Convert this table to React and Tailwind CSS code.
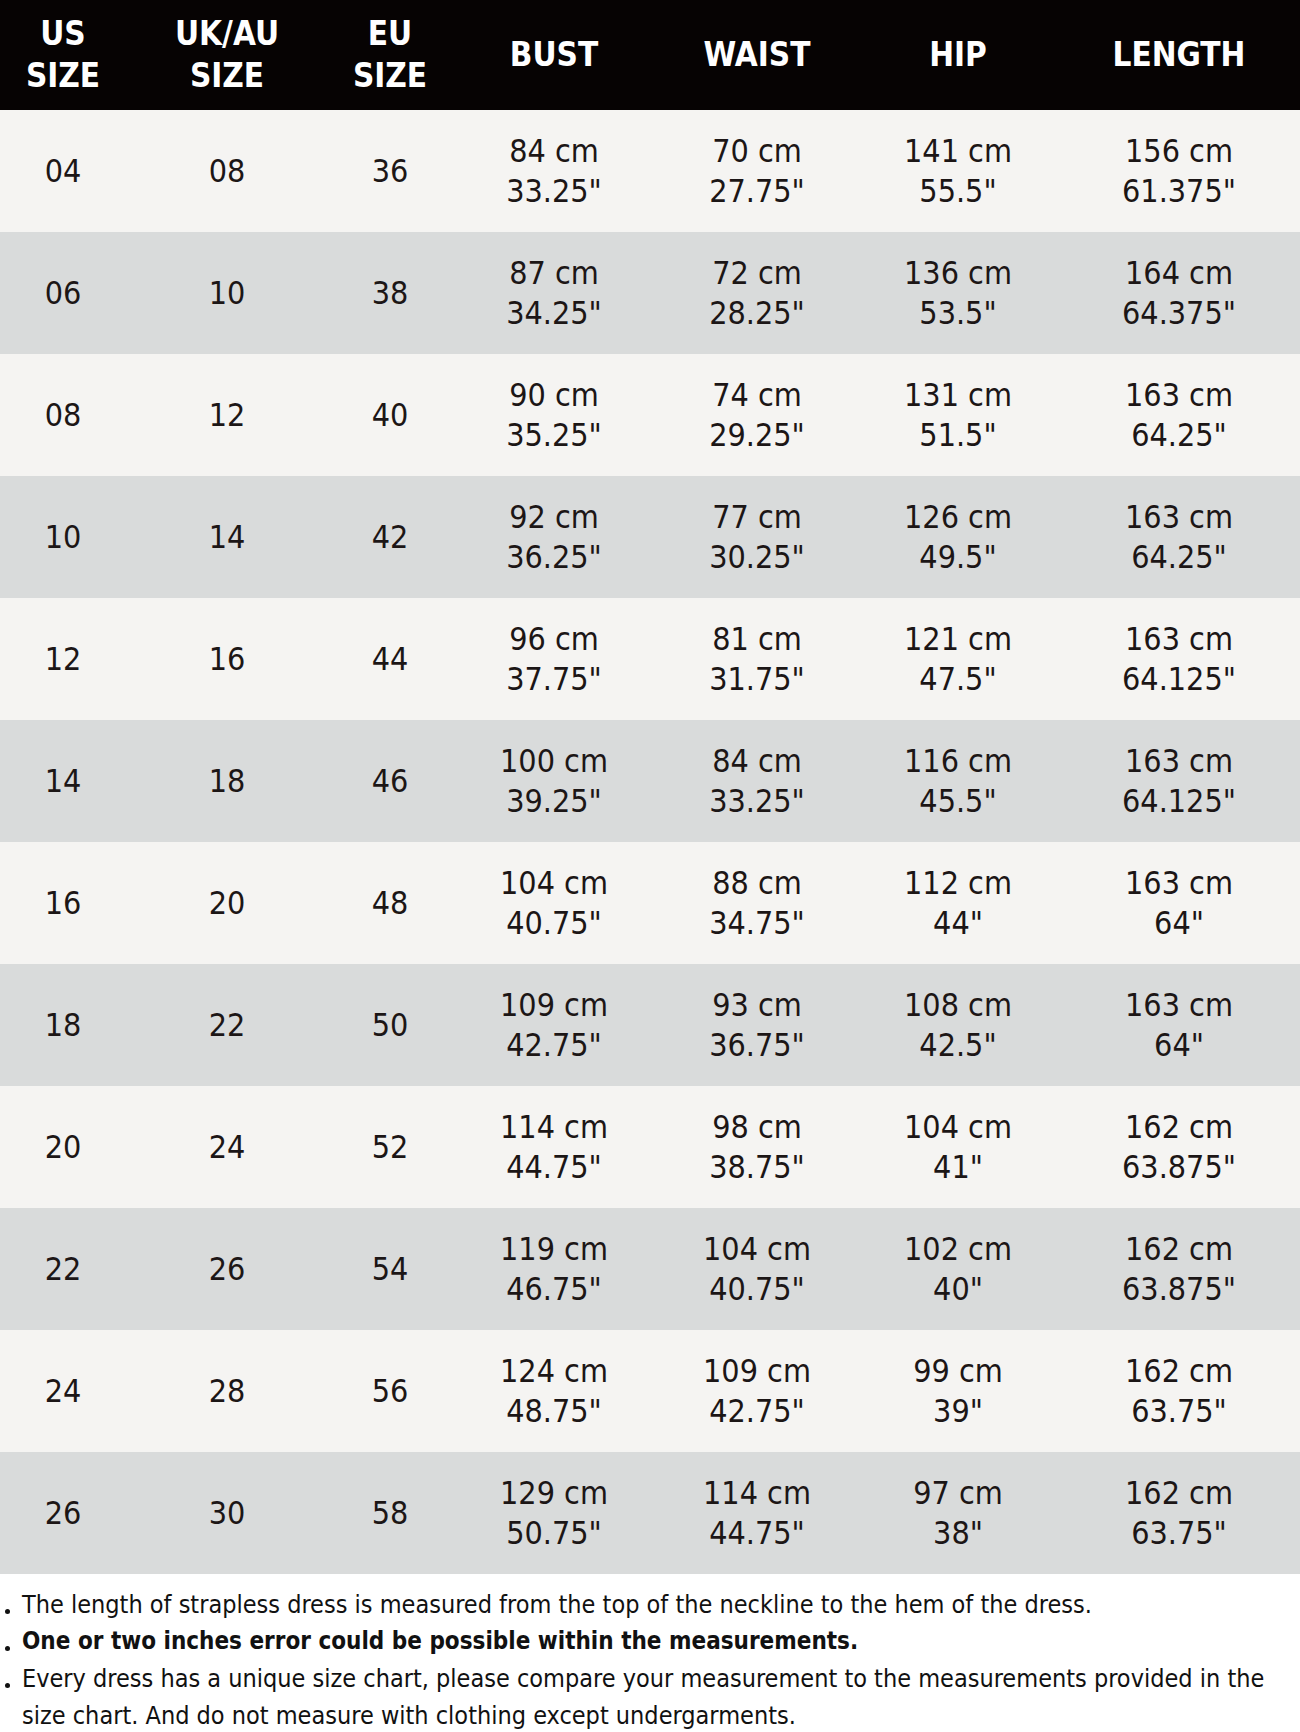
const headers = [["US", "SIZE"], ["UK/AU", "SIZE"], ["EU", "SIZE"], ["BUST"], ["WAIST"], ["HIP"], ["LENGTH"]];

const rows = [
  ["04", "08", "36", ["84 cm", '33.25"'], ["70 cm", '27.75"'], ["141 cm", '55.5"'], ["156 cm", '61.375"']],
  ["06", "10", "38", ["87 cm", '34.25"'], ["72 cm", '28.25"'], ["136 cm", '53.5"'], ["164 cm", '64.375"']],
  ["08", "12", "40", ["90 cm", '35.25"'], ["74 cm", '29.25"'], ["131 cm", '51.5"'], ["163 cm", '64.25"']],
  ["10", "14", "42", ["92 cm", '36.25"'], ["77 cm", '30.25"'], ["126 cm", '49.5"'], ["163 cm", '64.25"']],
  ["12", "16", "44", ["96 cm", '37.75"'], ["81 cm", '31.75"'], ["121 cm", '47.5"'], ["163 cm", '64.125"']],
  ["14", "18", "46", ["100 cm", '39.25"'], ["84 cm", '33.25"'], ["116 cm", '45.5"'], ["163 cm", '64.125"']],
  ["16", "20", "48", ["104 cm", '40.75"'], ["88 cm", '34.75"'], ["112 cm", '44"'], ["163 cm", '64"']],
  ["18", "22", "50", ["109 cm", '42.75"'], ["93 cm", '36.75"'], ["108 cm", '42.5"'], ["163 cm", '64"']],
  ["20", "24", "52", ["114 cm", '44.75"'], ["98 cm", '38.75"'], ["104 cm", '41"'], ["162 cm", '63.875"']],
  ["22", "26", "54", ["119 cm", '46.75"'], ["104 cm", '40.75"'], ["102 cm", '40"'], ["162 cm", '63.875"']],
  ["24", "28", "56", ["124 cm", '48.75"'], ["109 cm", '42.75"'], ["99 cm", '39"'], ["162 cm", '63.75"']],
  ["26", "30", "58", ["129 cm", '50.75"'], ["114 cm", '44.75"'], ["97 cm", '38"'], ["162 cm", '63.75"']],
];

const grid = "grid grid-cols-[126px_202px_124px_204px_202px_200px_242px]";

function Cell({ value }) {
  const lines = Array.isArray(value) ? value : [value];
  return (
    <div className="flex flex-col items-center justify-center leading-[40px]">
      {lines.map((l, i) => (
        <span key={i}>{l}</span>
      ))}
    </div>
  );
}

function Note({ children, bold }) {
  return (
    <p className={`flex items-start ${bold ? "font-bold text-[24px]" : ""}`}>
      <span className="w-[22px] h-[37px] shrink-0 flex items-end pb-[9px] pl-[5px]">
        <span className="block w-[5px] h-[5px] rounded-full bg-[#111]" />
      </span>
      <span>{children}</span>
    </p>
  );
}

export default function App() {
  return (
    <div className="w-[1300px] h-[1732px] bg-white text-[#1c1616] font-['Liberation_Sans_Narrow','DejaVu_Sans_Condensed','Liberation_Sans',sans-serif]">
      <div className={`${grid} h-[110px] bg-[#060303] text-white font-bold text-[33px]`}>
        {headers.map((h, i) => (
          <div key={i} className="flex flex-col items-center justify-center leading-[42px]">
            {h.map((l, j) => (
              <span key={j}>{l}</span>
            ))}
          </div>
        ))}
      </div>
      {rows.map((r, i) => (
        <div
          key={i}
          className={`${grid} h-[122px] text-[32px] ${i % 2 === 0 ? "bg-[#f5f4f2]" : "bg-[#d9dbdb]"}`}
        >
          {r.map((v, j) => (
            <Cell key={j} value={v} />
          ))}
        </div>
      ))}
      <div className="pt-[12px] text-[25px] leading-[37px] text-[#111]">
        <Note>The length of strapless dress is measured from the top of the neckline to the hem of the dress.</Note>
        <Note bold>One or two inches error could be possible within the measurements.</Note>
        <Note>
          Every dress has a unique size chart, please compare your measurement to the measurements provided in the size chart. And do not measure with clothing except undergarments.
        </Note>
      </div>
    </div>
  );
}
